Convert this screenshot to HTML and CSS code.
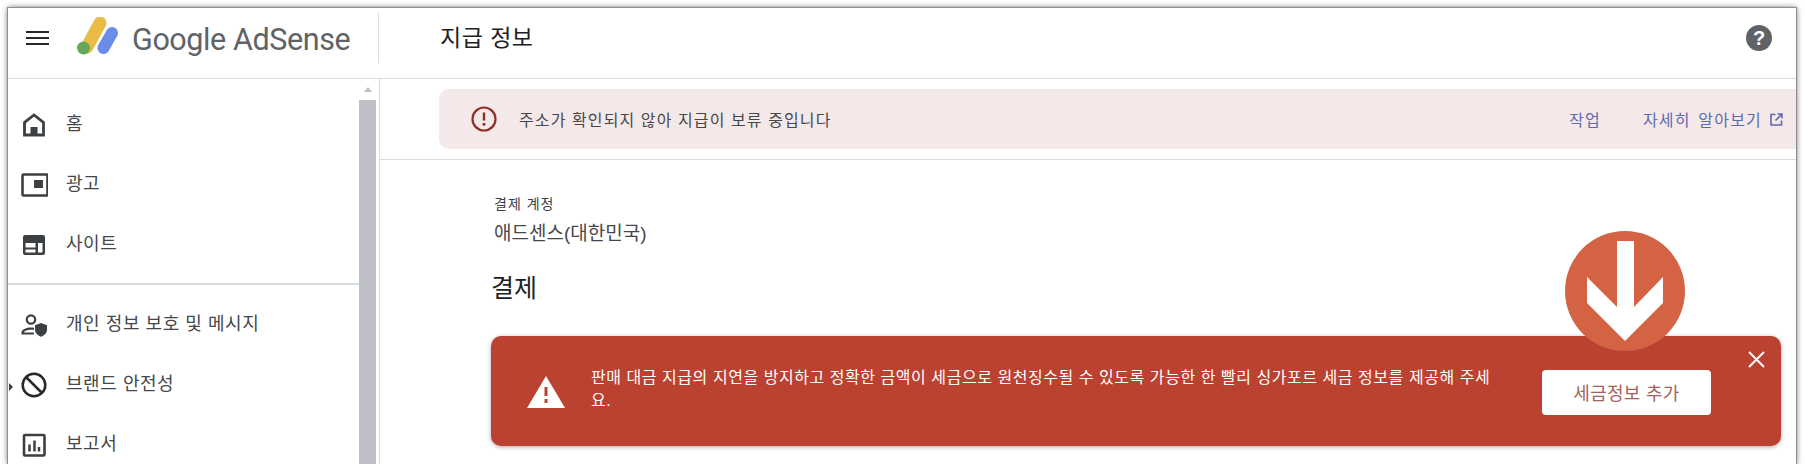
FILE: index.html
```html
<!DOCTYPE html>
<html lang="ko">
<head>
    <meta charset="UTF-8">
    <title>지급 정보</title>
    <link rel="stylesheet" href="styles.css">
</head>
<body>
    <div class="window">
        <header class="topbar">
            <div class="brand">
                <svg class="menu-icon" width="23" height="14" viewBox="0 0 23 14"><path d="M0 1h23M0 7h23M0 13h23" stroke="#27292c" stroke-width="2"/></svg>
                <svg class="logo" width="46" height="40" viewBox="0 0 46 40">
                    <path d="M26 6 13 30" stroke="#e9bd45" stroke-width="13" stroke-linecap="round"/>
                    <path d="M38 16 29.500 31" stroke="#6a8ee8" stroke-width="12" stroke-linecap="round"/>
                    <circle cx="9.500" cy="31" r="6.500" fill="#65a85a"/>
                </svg>
                <span class="brand-name">Google AdSense</span>
            </div>
            <h1 class="page-title">지급 정보</h1>
            <svg class="help" width="26" height="26" viewBox="0 0 26 26"><circle cx="13" cy="13" r="13" fill="#5f6368"/><text x="13" y="20" text-anchor="middle" class="help-mark">?</text></svg>
        </header>

        <div class="columns">
            <aside class="sidebar">
                <nav class="nav">
                    <a class="nav-item">
                        <svg width="28" height="24" viewBox="0 0 28 24"><path d="M4.500 22V9.500L14 2l9.500 7.500V22z" fill="none" stroke="#3c4043" stroke-width="2.800"/><rect x="10.500" y="14" width="7" height="8" fill="#3c4043"/></svg>
                        <span>홈</span>
                    </a>
                    <a class="nav-item">
                        <svg width="28" height="24" viewBox="0 0 28 24"><rect x="2.500" y="1.500" width="25" height="21" rx="1" fill="none" stroke="#3c4043" stroke-width="2.600"/><rect x="14" y="7" width="9" height="8" fill="#3c4043"/></svg>
                        <span>광고</span>
                    </a>
                    <a class="nav-item">
                        <svg width="28" height="24" viewBox="0 0 28 24"><path d="M5 2h18a2 2 0 0 1 2 2v16a2 2 0 0 1-2 2H5a2 2 0 0 1-2-2V4a2 2 0 0 1 2-2zm.500 8v4.500h10V10zm12.500 0v9.500h4.500V10zM5.500 16.500v3h10v-3z" fill="#3c4043" fill-rule="evenodd"/></svg>
                        <span>사이트</span>
                    </a>
                    <hr class="nav-line">
                    <a class="nav-item">
                        <svg width="28" height="24" viewBox="0 0 28 24"><circle cx="11" cy="6.500" r="4.200" fill="none" stroke="#3c4043" stroke-width="2.200"/><path d="M1.500 21.500v-2c0-3 5-5 9.500-5 1 0 2 .1 3 .3v2.200c-1-.2-2-.3-3-.3-3.500 0-6.800 1.300-7.200 2.800H14v2z" fill="#3c4043"/><path d="M21 10l6 2.300v4.500c0 3-2.600 5.700-6 7-3.400-1.300-6-4-6-7v-4.500z" fill="#3c4043"/></svg>
                        <span>개인 정보 보호 및 메시지</span>
                    </a>
                    <a class="nav-item nav-current">
                        <svg width="28" height="26" viewBox="0 0 28 26"><circle cx="14" cy="13" r="11.300" fill="none" stroke="#27292c" stroke-width="2.500"/><path d="M6 5l16 16" stroke="#27292c" stroke-width="2.500"/></svg>
                        <span>브랜드 안전성</span>
                    </a>
                    <a class="nav-item">
                        <svg width="28" height="24" viewBox="0 0 28 24"><rect x="4" y="2" width="20.500" height="20.500" rx="1" fill="none" stroke="#3c4043" stroke-width="2.600"/><path d="M9.500 11.500v7M14.500 7.500v11M19 14v4.500" stroke="#3c4043" stroke-width="2.500"/></svg>
                        <span>보고서</span>
                    </a>
                </nav>
                <div class="scroll">
                    <div class="scroll-up"></div>
                    <div class="scroll-thumb"></div>
                </div>
            </aside>

            <main class="content">
                <div class="notice">
                    <svg width="26" height="26" viewBox="0 0 26 26"><circle cx="13" cy="13" r="11.500" fill="none" stroke="#8e2f2a" stroke-width="2.200"/><path d="M13 6.500v8" stroke="#8e2f2a" stroke-width="2.400"/><circle cx="13" cy="18.300" r="1.500" fill="#8e2f2a"/></svg>
                    <span class="notice-text">주소가 확인되지 않아 지급이 보류 중입니다</span>
                    <a class="notice-link notice-action">작업</a>
                    <a class="notice-link">자세히 알아보기</a>
                    <svg class="ext-icon" width="13" height="13" viewBox="0 0 13 13"><path d="M5.500 1.500H1v10.500h10.500V7.500" fill="none" stroke="#5c6bb0" stroke-width="1.600"/><path d="M7.500 1h4.500v4.500M12 1 5.500 7.500" fill="none" stroke="#5c6bb0" stroke-width="1.600"/></svg>
                </div>

                <section class="payment">
                    <div class="account-label">결제 계정</div>
                    <div class="account-name">애드센스(대한민국)</div>
                    <h2 class="section-title">결제</h2>

                    <div class="tax-alert">
                        <svg class="warn-icon" width="38" height="32" viewBox="0 0 38 32"><path d="M19 0 38 32H0z" fill="#fff"/><path d="M19 11v9M19 23v4" stroke="#bb4130" stroke-width="3"/></svg>
                        <p class="tax-text">판매 대금 지급의 지연을 방지하고 정확한 금액이 세금으로 원천징수될 수 있도록 가능한 한 빨리 싱가포르 세금 정보를 제공해 주세요.</p>
                        <button class="tax-button">세금정보 추가</button>
                        <svg class="close-icon" width="17" height="17" viewBox="0 0 17 17"><path d="M1 1l15 15M16 1 1 16" stroke="#fff" stroke-width="2"/></svg>
                    </div>
                </section>
            </main>
        </div>

        <!-- 강조용 화살표 -->
        <svg class="callout" width="120" height="120" viewBox="0 0 120 120">
            <circle cx="60" cy="60" r="60" fill="#d46344"/>
            <path d="M52 10h17v66l29-30v26l-38 38-38-38V46l30 30z" fill="#fff"/>
        </svg>
    </div>
</body>
</html>
```

FILE: styles.css
```css
body {
    margin: 0;
    background-color: #fff;
    font-family: "Liberation Sans", "Noto Sans CJK KR", sans-serif;
    color: #3c4043;
}
.window {
    position: relative;
    width: 1788px;
    height: 456px;
    margin: 8px 0 0 8px;
    overflow: hidden;
    background-color: #fff;
    outline: 1px solid #8d8f91;
    box-shadow: 0 0 6px rgba(0, 0, 0, 0.7);
}

/* 상단 바 */
.topbar {
    display: flex;
    align-items: center;
    height: 70px;
    border-bottom: 1px solid #dadce0;
    box-sizing: content-box;
}
.brand {
    display: flex;
    align-items: center;
    box-sizing: border-box;
    width: 371px;
    height: 50px;
    margin-bottom: 10px;
    border-right: 1px solid #dadce0;
}
.menu-icon {
    margin: 0 25px 0 18px;
}
.logo {
    margin: -2px 12px 0 0;
}
.brand-name {
    margin-bottom: -3px;
    font-family: Roboto, sans-serif;
    font-size: 30.500px;
    letter-spacing: -0.4px;
    color: #5f6368;
}
.page-title {
    flex: 1;
    margin: 0 0 14px 61px;
    font-size: 23px;
    font-weight: 400;
    letter-spacing: 0.5px;
    color: #202124;
}
.help {
    margin: 0 24px 10px 0;
}
.help-mark {
    font-family: "Liberation Sans", sans-serif;
    font-size: 20px;
    font-weight: bold;
    fill: #fff;
}

.columns {
    display: flex;
    height: 386px;
}

/* 사이드바 */
.sidebar {
    display: flex;
    flex: none;
    box-sizing: border-box;
    width: 372px;
    border-right: 1px solid #dadce0;
}
.nav {
    flex: 1;
    padding-top: 16px;
}
.nav-item {
    position: relative;
    display: flex;
    align-items: center;
    height: 60px;
    padding-left: 12px;
    gap: 18px;
    font-size: 18px;
    letter-spacing: 0.55px;
    color: #45484b;
}
.nav-item span {
    padding-bottom: 7px;
}
.nav-current::before {
    content: "";
    position: absolute;
    left: 1px;
    top: 28px;
    border-left: 4px solid #3c4043;
    border-top: 4px solid transparent;
    border-bottom: 4px solid transparent;
}
.nav-line {
    height: 2px;
    margin: 8px 0 10px;
    border: none;
    background-color: #dadce0;
}
.scroll {
    flex: none;
    width: 17px;
    margin-right: 3px;
}
.scroll-up {
    width: 0;
    margin: 8px auto 8px;
    border-left: 4px solid transparent;
    border-right: 4px solid transparent;
    border-bottom: 5px solid #bdc1c6;
}
.scroll-thumb {
    height: 400px;
    background-color: #bcc0c4;
}

/* 본문 */
.content {
    flex: 1;
    min-width: 0;
}
.notice {
    display: flex;
    align-items: center;
    height: 60px;
    margin: 10px 0 10px 59px;
    padding-left: 32px;
    border-radius: 10px 0 0 10px;
    background-color: #f5e8e8;
}
.notice-text {
    flex: 1;
    margin-left: 22px;
    font-size: 16px;
    letter-spacing: 1.1px;
    color: #45484b;
}
.notice-link {
    font-size: 16px;
    letter-spacing: 1.2px;
    word-spacing: 2px;
    color: #5c6bb0;
}
.notice-action {
    margin-right: 42px;
}
.ext-icon {
    margin: 0 13px 0 8px;
}
.payment {
    padding: 33px 15px 0 111px;
    border-top: 1px solid #dadce0;
}
.account-label {
    padding-left: 3px;
    font-size: 14px;
    letter-spacing: 1px;
    color: #3c4043;
}
.account-name {
    margin-top: 5px;
    padding-left: 3px;
    font-size: 19px;
    color: #45484b;
}
.section-title {
    margin: 23px 0 32px;
    font-size: 25px;
    font-weight: 400;
    color: #202124;
}
.tax-alert {
    position: relative;
    display: flex;
    align-items: center;
    box-sizing: border-box;
    height: 110px;
    padding: 0 70px 0 36px;
    border-radius: 10px;
    background-color: #bb4130;
    box-shadow: 0 1px 4px rgba(0, 0, 0, 0.35);
}
.warn-icon {
    flex: none;
    margin-top: 2px;
}
.tax-text {
    width: 905px;
    margin: -5px 0 0 26px;
    font-size: 16px;
    letter-spacing: 0.55px;
    line-height: 23px;
    color: #fff;
}
.tax-button {
    flex: none;
    width: 169px;
    height: 45px;
    margin-left: 46px;
    margin-top: 2px;
    border: none;
    border-radius: 4px;
    background-color: #fff;
    font-family: "Liberation Sans", "Noto Sans CJK KR", sans-serif;
    font-size: 18px;
    letter-spacing: 0.3px;
    color: #a4635a;
}
.close-icon {
    position: absolute;
    top: 15px;
    right: 16px;
}
.callout {
    position: absolute;
    left: 1557px;
    top: 223px;
}
```
